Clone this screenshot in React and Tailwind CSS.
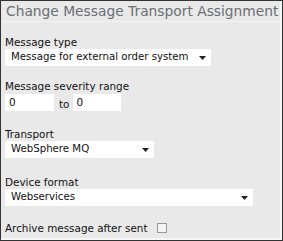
import React from "react";

function Caret() {
  return (
    <svg width="7" height="4" viewBox="0 0 7 4" className="shrink-0">
      <path d="M0 0 H7 L3.5 4 Z" fill="#222" />
    </svg>
  );
}

function Select({ value, width }) {
  return (
    <div
      className={`flex items-center justify-between bg-white h-[17px] pl-[6px] pr-[5px] text-[10.2px] text-[#111] whitespace-nowrap ${width}`}
    >
      <span className="leading-none">{value}</span>
      <Caret />
    </div>
  );
}

export default function App() {
  return (
    <div
      className="w-[283px] h-[241px] bg-[#333] p-px"
      style={{ fontFamily: '"DejaVu Sans", Verdana, sans-serif' }}
    >
      <div className="w-full h-full bg-[#e9e9e9] border-r-2 border-b-2 border-[#f6f6f6] flex flex-col">
        <div className="h-[21px] border-b border-[#f2f2f2] pl-[5px] pt-[2px] text-[13.8px] leading-[17px] text-[#6b6e76] whitespace-nowrap">
          Change Message Transport Assignment
        </div>
        <div className="flex flex-col pl-[4px] text-[10.4px] text-[#111]">
          <div className="mt-[14px] leading-[12px] whitespace-nowrap">Message type</div>
          <div className="mt-[1px]">
            <Select value="Message for external order system" width="w-[206px]" />
          </div>

          <div className="mt-[14px] leading-[12px] whitespace-nowrap">Message severity range</div>
          <div className="mt-[2px] flex items-center">
            <div className="w-[49px] h-[17px] bg-white pl-[4px] flex items-center leading-none">0</div>
            <span className="ml-[5px] mr-[4px] leading-none mt-[3px]">to</span>
            <div className="w-[48px] h-[17px] bg-white pl-[3px] flex items-center leading-none">0</div>
          </div>

          <div className="mt-[17px] leading-[12px]">Transport</div>
          <div className="mt-[1px]">
            <Select value="WebSphere MQ" width="w-[149px]" />
          </div>

          <div className="mt-[18px] leading-[12px]">Device format</div>
          <div className="mt-[1px]">
            <Select value="Webservices" width="w-[248px]" />
          </div>

          <div className="mt-[16px] flex items-center leading-[12px] whitespace-nowrap">
            <span>Archive message after sent</span>
            <span className="ml-[9px] w-[10px] h-[10px] border border-[#999] bg-[#f4f4f4] inline-block" />
          </div>
        </div>
      </div>
    </div>
  );
}
